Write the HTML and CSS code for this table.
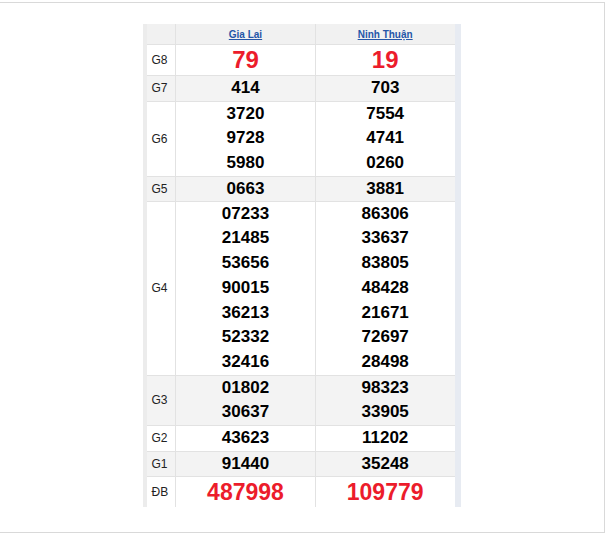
FILE: index.html
```html
<!DOCTYPE html>
<html lang="vi">
<head>
<meta charset="utf-8">
<title>KQXS</title>
<link rel="stylesheet" href="styles.css">
</head>
<body>
<div class="frame">
  <div class="board">
    <table class="kq">
      <tr class="hd">
        <th class="lbl"></th>
        <th><a href="#">Gia Lai</a></th>
        <th><a href="#">Ninh Thuận</a></th>
      </tr>
      <tr class="g8">
        <td class="lbl">G8</td>
        <td><div class="big">79</div></td>
        <td><div class="big">19</div></td>
      </tr>
      <tr class="alt">
        <td class="lbl">G7</td>
        <td><div class="n">414</div></td>
        <td><div class="n">703</div></td>
      </tr>
      <tr>
        <td class="lbl">G6</td>
        <td><div class="n">3720</div><div class="n">9728</div><div class="n">5980</div></td>
        <td><div class="n">7554</div><div class="n">4741</div><div class="n">0260</div></td>
      </tr>
      <tr class="alt">
        <td class="lbl">G5</td>
        <td><div class="n s">0663</div></td>
        <td><div class="n s">3881</div></td>
      </tr>
      <tr>
        <td class="lbl">G4</td>
        <td><div class="n">07233</div><div class="n">21485</div><div class="n">53656</div><div class="n">90015</div><div class="n">36213</div><div class="n">52332</div><div class="n">32416</div></td>
        <td><div class="n">86306</div><div class="n">33637</div><div class="n">83805</div><div class="n">48428</div><div class="n">21671</div><div class="n">72697</div><div class="n">28498</div></td>
      </tr>
      <tr class="alt">
        <td class="lbl">G3</td>
        <td><div class="n">01802</div><div class="n">30637</div></td>
        <td><div class="n">98323</div><div class="n">33905</div></td>
      </tr>
      <tr>
        <td class="lbl">G2</td>
        <td><div class="n">43623</div></td>
        <td><div class="n">11202</div></td>
      </tr>
      <tr class="alt">
        <td class="lbl">G1</td>
        <td><div class="n">91440</div></td>
        <td><div class="n">35248</div></td>
      </tr>
      <tr class="db">
        <td class="lbl">ĐB</td>
        <td><div class="big db-n">487998</div></td>
        <td><div class="big db-n">109779</div></td>
      </tr>
    </table>
  </div>
</div>
</body>
</html>
```

FILE: styles.css
```css
html, body {
  margin: 0;
  padding: 0;
  background: #ffffff;
  font-family: "Liberation Sans", Arial, sans-serif;
}

.frame {
  margin: 2px 2px 0 -2px;
  height: 508px;
  border: 1px solid #d9d9d9;
  padding-top: 21px;
  box-sizing: content-box;
  display: flex;
  justify-content: center;
  align-items: flex-start;
}

.board {
  display: flex;
  border-left: 4px solid #ececec;
  border-right: 6px solid #e7ebf2;
  background: #ffffff;
}

.kq {
  border-collapse: collapse;
  table-layout: fixed;
  width: 308px;
}

.kq th,
.kq td {
  padding: 0;
  border-left: 1px solid #e2e2e2;
  border-right: 1px solid #e2e2e2;
  border-bottom: 1px solid #e2e2e2;
  text-align: center;
  vertical-align: middle;
  color: #000;
}

.kq tr > :first-child { border-left: none; }
.kq tr > :last-child { border-right: none; }
.kq tr.db td { border-bottom: none; }

.kq .lbl {
  width: 29px;
  text-align: left;
  padding-left: 5px;
  box-sizing: border-box;
  font-size: 12px;
  color: #222;
}

.kq th { width: 138px; }

.hd th {
  height: 20px;
  background: #f1f1f1;
  font-size: 10px;
  font-weight: bold;
}

.hd a {
  color: #2556a8;
  text-decoration: underline;
}

.alt td { background: #f3f3f3; }

.n {
  height: 24.7px;
  line-height: 24.7px;
  font-size: 17px;
  font-weight: bold;
  color: #000;
}

.n.s {
  height: 24px;
  line-height: 24px;
}

.big {
  height: 30px;
  line-height: 30px;
  font-size: 24px;
  font-weight: bold;
  color: #ec1c2b;
}

.big.db-n {
  height: 30px;
  line-height: 30px;
  font-size: 23px;
}
```
